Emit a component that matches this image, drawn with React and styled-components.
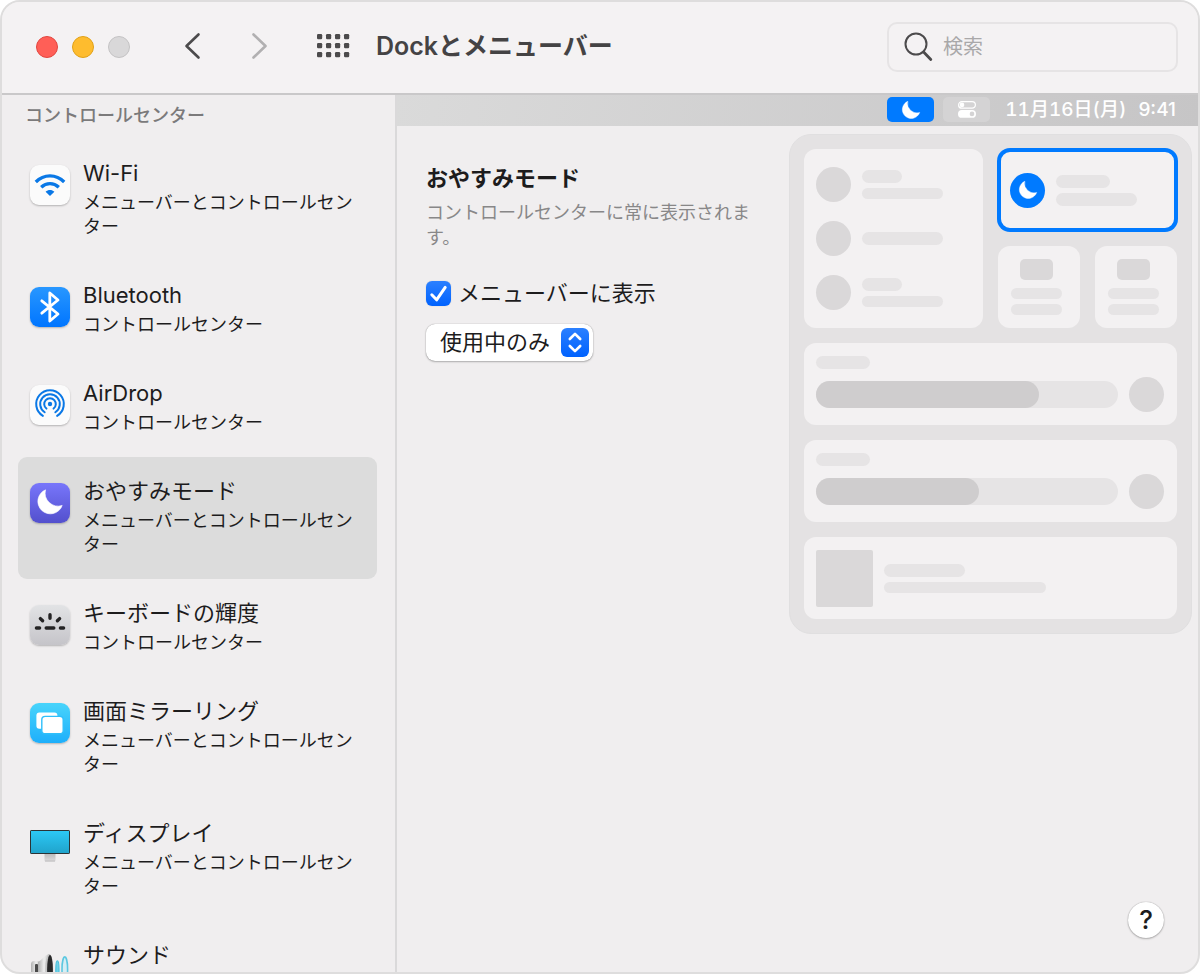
import React, { useState } from 'react'
import styled, { createGlobalStyle, css } from 'styled-components'

const GlobalStyle = createGlobalStyle`
  * {
    box-sizing: border-box;
  }
  body {
    margin: 0;
    background: #fff;
    color: #1d1c1d;
    font-family: Inter, "Noto Sans CJK JP", sans-serif;
  }
  button, input, select {
    font-family: inherit;
    color: inherit;
  }
  h1, h2, h3, p, ul {
    margin: 0;
    padding: 0;
  }
`

const Window = styled.div`
  display: flex;
  flex-direction: column;
  height: 100vh;
  overflow: hidden;
  border: 2px solid #dedddd;
  border-radius: 20px;
  background: #f0eeef;
`

/* toolbar */

const Toolbar = styled.header`
  display: flex;
  align-items: center;
  flex: none;
  height: 93px;
  padding: 0 20px 2px 34px;
  background: #f4f2f3;
  border-bottom: 2px solid #c9c8c9;
`

const Lights = styled.div`
  display: flex;
  gap: 14px;
`

const Light = styled.button`
  width: 22px;
  height: 22px;
  padding: 0;
  border: 1px solid ${p => p.$edge};
  border-radius: 50%;
  background: ${p => p.$color};
`

const NavButton = styled.button`
  display: flex;
  padding: 0;
  border: 0;
  background: none;
  color: ${p => (p.disabled ? '#b1b0b1' : '#4c4b4c')};
`

const Nav = styled.nav`
  display: flex;
  align-items: center;
  gap: 48px;
  margin: 0 26px 0 53px;
  padding-bottom: 2px;
`

const WindowTitle = styled.h1`
  flex: 1;
  padding-bottom: 2px;
  font-size: 25px;
  line-height: 36px;
  font-weight: 600;
  color: #444344;
`

const SearchBox = styled.label`
  display: flex;
  align-items: center;
  gap: 10px;
  width: 291px;
  height: 50px;
  padding: 0 15px;
  border: 2px solid #e6e4e5;
  border-radius: 10px;
`

const SearchInput = styled.input`
  flex: 1;
  min-width: 0;
  padding: 0;
  border: 0;
  outline: 0;
  background: none;
  font-size: 20px;
  line-height: 28px;
  &::placeholder {
    color: #a9a8a9;
  }
`

/* sidebar */

const Body = styled.div`
  display: flex;
  flex: 1;
  min-height: 0;
`

const Sidebar = styled.aside`
  flex: 0 0 395px;
  padding: 9px 18px 0 16px;
  border-right: 2px solid #dad9da;
  overflow-y: auto;
  scrollbar-width: none;
`

const GroupName = styled.h2`
  margin: 0 0 11px 7px;
  font-size: 18px;
  line-height: 24px;
  font-weight: 500;
  color: #7b7a7b;
`

const ItemList = styled.ul`
  list-style: none;
`

const Item = styled.button`
  display: flex;
  align-items: flex-start;
  gap: 13px;
  width: 100%;
  padding: 20px 14px 22px 12px;
  border: 0;
  border-radius: 9px;
  background: none;
  text-align: left;
  ${p => p.$selected && css`
    background: #dcdcdc;
  `}
`

const ItemIcon = styled.span`
  display: flex;
  flex: none;
  margin-top: 6px;
  border-radius: 9px;
  ${p => p.$tile && css`
    background: ${p.$tile};
    box-shadow: 0 1px 2px rgba(0, 0, 0, 0.25);
  `}
`

const ItemText = styled.span`
  display: flex;
  flex-direction: column;
  gap: 4px;
`

const ItemName = styled.span`
  font-size: 22px;
  line-height: 28px;
`

const ItemPlace = styled.span`
  font-size: 18px;
  line-height: 24px;
`

/* content */

const Content = styled.main`
  display: flex;
  flex-direction: column;
  flex: 1;
  min-width: 0;
`

const MenuBar = styled.div`
  display: flex;
  align-items: center;
  justify-content: flex-end;
  gap: 9px;
  height: 31px;
  padding: 0 22px 2px 0;
  background: linear-gradient(100deg, #dadada, #c6c5c6);
  color: #fff;
`

const MenuExtra = styled.span`
  display: flex;
  align-items: center;
  justify-content: center;
  width: 47px;
  height: 25px;
  border-radius: 5px;
  background: ${p => (p.$active ? '#007aff' : '#d4d3d4')};
`

const Clock = styled.span`
  display: flex;
  gap: 12px;
  margin-left: 6px;
  font-size: 19px;
  line-height: 25px;
  font-weight: 500;
`

const ClockDate = styled.span`
  font-variant-numeric: tabular-nums;
`

const Pane = styled.div`
  display: flex;
  flex: 1;
  align-items: flex-start;
  gap: 25px;
  padding: 8px 6px 0 29px;
`

const Settings = styled.section`
  flex: 1;
  padding-top: 30px;
`

const PaneTitle = styled.h2`
  font-size: 22px;
  line-height: 28px;
  font-weight: 600;
`

const PaneText = styled.p`
  margin: 8px 0 29px;
  font-size: 18px;
  line-height: 25px;
  color: #888788;
`

const CheckRow = styled.label`
  display: flex;
  align-items: center;
  gap: 7px;
  font-size: 22px;
  line-height: 28px;
`

const CheckBox = styled.span`
  position: relative;
  display: flex;
  svg {
    position: absolute;
    inset: 0;
    pointer-events: none;
  }
`

const CheckInput = styled.input`
  appearance: none;
  width: 25px;
  height: 25px;
  margin: 0;
  border-radius: 6px;
  background: #fff;
  box-shadow: 0 0 1px rgba(0, 0, 0, 0.3);
  &:checked {
    background: linear-gradient(#2b80ff, #0062fe);
  }
`

const SelectBox = styled.div`
  position: relative;
  width: 167px;
  margin-top: 17px;
`

const Select = styled.select`
  appearance: none;
  display: block;
  width: 100%;
  height: 37px;
  padding: 0 40px 2px 14px;
  border: 0;
  border-radius: 9px;
  background: #fff;
  box-shadow: 0 0 1px rgba(0, 0, 0, 0.4), 0 1px 2px rgba(0, 0, 0, 0.25);
  font-size: 22px;
`

const SelectArrows = styled.span`
  position: absolute;
  top: 4px;
  right: 4px;
  display: flex;
  border-radius: 6px;
  background: linear-gradient(#2b80ff, #0062fe);
  pointer-events: none;
`

const Footer = styled.footer`
  display: flex;
  justify-content: flex-end;
  padding: 0 34px 34px;
`

const HelpButton = styled.button`
  width: 36px;
  height: 36px;
  padding: 0;
  border: 0;
  border-radius: 50%;
  background: #fff;
  box-shadow: 0 0 1px rgba(0, 0, 0, 0.4), 0 1px 2px rgba(0, 0, 0, 0.25);
  font-size: 26px;
  line-height: 36px;
  font-weight: 500;
`

/* control center preview */

const Preview = styled.div`
  display: grid;
  grid-template-columns: 1fr 1fr;
  gap: 15px;
  flex: none;
  width: 403px;
  padding: 14px;
  border: 1px solid #e0dfe0;
  border-radius: 22px;
  background: #e4e2e3;
`

const Card = styled.div`
  display: flex;
  min-height: 82px;
  padding: 12px;
  border-radius: 12px;
  background: #f3f1f2;
`

const ToggleCard = styled(Card)`
  flex-direction: column;
  gap: 19px;
  padding: 18px 12px;
`

const FocusCard = styled(Card)`
  align-items: center;
  padding: 0 9px;
  border: 3px solid #007aff;
  box-shadow: 0 0 0 1px #007aff;
`

const SmallCard = styled(Card)`
  flex: 1;
  flex-direction: column;
  gap: 5px;
  padding: 13px;
`

const SliderCard = styled(Card)`
  grid-column: 1 / -1;
  flex-direction: column;
  gap: 8px;
  padding: 13px 13px 13px 12px;
`

const MediaCard = styled(Card)`
  grid-column: 1 / -1;
  align-items: center;
  gap: 11px;
`

const RightCards = styled.div`
  display: flex;
  flex-direction: column;
  gap: 15px;
`

const CardPair = styled.div`
  display: flex;
  gap: 15px;
`

const Row = styled.div`
  display: flex;
  align-items: center;
  gap: 11px;
`

const Lines = styled.div`
  display: flex;
  flex-direction: column;
  gap: 5px;
`

const Line = styled.div`
  width: ${p => p.$w}px;
  height: ${p => (p.$thin ? 11 : 13)}px;
  border-radius: 7px;
  background: #e6e4e5;
`

const Dot = styled.div`
  display: flex;
  align-items: center;
  justify-content: center;
  flex: none;
  width: 35px;
  height: 35px;
  border-radius: 50%;
  background: ${p => (p.$active ? '#007aff' : '#dad8d9')};
`

const Thumb = styled.div`
  width: 33px;
  height: 21px;
  margin: 0 0 3px 9px;
  border-radius: 5px;
  background: #dad8d9;
`

const Cover = styled.div`
  width: 57px;
  height: 57px;
  border-radius: 2px;
  background: #dad8d9;
`

const Track = styled.div`
  flex: 1;
  height: 27px;
  border-radius: 14px;
  background: #e6e4e5;
`

const Fill = styled.div`
  height: 100%;
  border-radius: 14px;
  background: #cfcdce;
`

/* icons */

const Moon = ({ small }) => (
  <svg width={small ? 20 : 40} height={small ? 20 : 40} viewBox={small ? '6 5 28 28' : '0 0 40 40'}>
    <path fill="#fff" stroke="#fff" strokeWidth="0.6" strokeLinejoin="round"
      d="M15.6 6.8A12.5 12.5 0 1 0 32.2 22.4A13 13 0 0 1 15.6 6.8Z" />
  </svg>
)

const WifiIcon = () => (
  <svg width="40" height="40" viewBox="0 0 40 40" fill="none" stroke="#0a78e6" strokeWidth="3.3">
    <path d="M5.8 17C13.8 8.9 26.2 8.9 34.2 17" />
    <path d="M11.2 22.3C16.4 17.4 23.6 17.4 28.8 22.3" />
    <path d="M15.6 26.7c2.5-2.4 6.3-2.4 8.8 0L20 31z" fill="#0a78e6" stroke="none" />
  </svg>
)

const BluetoothIcon = () => (
  <svg width="40" height="40" viewBox="0 0 40 40" fill="none" stroke="#fff" strokeWidth="2.8" strokeLinecap="round" strokeLinejoin="round">
    <path d="M11.8 13.8L28 27L19.8 34V6L28 13L11.8 26.2" />
  </svg>
)

const ring = (r, deg) => {
  const a = (deg * Math.PI) / 180
  const dx = r * Math.sin(a)
  const y = 19 + r * Math.cos(a)
  return `M${20 - dx} ${y}A${r} ${r} 0 1 1 ${20 + dx} ${y}`
}

const AirDropIcon = () => (
  <svg width="40" height="40" viewBox="0 0 40 40" fill="none" stroke="#0a78e6" strokeWidth="2" strokeLinecap="round">
    <path d={ring(13.8, 31)} />
    <path d={ring(9.8, 33)} />
    <path d={ring(5.8, 38)} />
    <circle cx="20" cy="19" r="2.2" fill="#0a78e6" stroke="none" />
  </svg>
)

const KeyboardIcon = () => (
  <svg width="40" height="40" viewBox="0 0 40 40" fill="none" stroke="#242324" strokeWidth="3.4" strokeLinecap="round">
    <path d="M6.4 23H9.6M16.2 23H23.8M30.4 23H33.6M20 9.8V13.2M10.4 13.6L12.6 15.8M29.6 13.6L27.4 15.8" />
  </svg>
)

const MirrorIcon = () => (
  <svg width="40" height="40" viewBox="0 0 40 40" fill="#fff">
    <rect x="6.4" y="9.4" width="21" height="16.4" rx="3" />
    <rect x="11.8" y="13.4" width="21.4" height="17.4" rx="3.4" stroke="#2fbffb" strokeWidth="1.4" />
  </svg>
)

const DisplayIcon = () => (
  <svg width="40" height="40" viewBox="0 0 40 40">
    <defs>
      <linearGradient id="screen" x1="0" y1="0" x2="0" y2="1">
        <stop offset="0" stopColor="#2cc9f6" />
        <stop offset="1" stopColor="#20a3cb" />
      </linearGradient>
      <linearGradient id="stand" x1="0" y1="0" x2="0" y2="1">
        <stop offset="0" stopColor="#b9b8b9" />
        <stop offset="1" stopColor="#dddcdd" />
      </linearGradient>
    </defs>
    <rect x="14.5" y="28" width="11" height="8.5" rx="1" fill="url(#stand)" />
    <rect x="15" y="35.4" width="10" height="1.2" fill="#c3c2c3" />
    <rect x="0.5" y="5.5" width="39" height="23" rx="0.6" fill="url(#screen)" stroke="#2c3335" />
  </svg>
)

const SoundIcon = () => (
  <svg width="40" height="40" viewBox="0 0 40 40">
    <defs>
      <linearGradient id="cone" x1="0" y1="0" x2="1" y2="0">
        <stop offset="0" stopColor="#b0b0b0" />
        <stop offset="0.5" stopColor="#eeeeee" />
        <stop offset="1" stopColor="#c0c0c0" />
      </linearGradient>
    </defs>
    <rect x="1" y="14" width="10" height="17" rx="3.4" fill="url(#cone)" />
    <rect x="5" y="17" width="3" height="12" rx="1" fill="#4a4a4a" />
    <path d="M8 15C12 13 14 9 18.4 7H20V38H18.4C14 36 12 32 8 30Z" fill="url(#cone)" />
    <ellipse cx="19.2" cy="22.5" rx="4" ry="15.6" fill="#c4c4c4" />
    <ellipse cx="20" cy="22.5" rx="2.9" ry="14.4" fill="#29292a" />
    <ellipse cx="27.4" cy="22.5" rx="1.6" ry="8.6" fill="#6fd0e6" stroke="#48bfdc" strokeWidth="1.2" />
    <ellipse cx="34.8" cy="22.5" rx="2.8" ry="12.6" fill="#d5eef4" stroke="#5cc7e0" strokeWidth="1.6" />
  </svg>
)

const ControlCenterIcon = () => (
  <svg width="18" height="17" viewBox="0 0 18 17">
    <rect x="0.6" y="0.6" width="16.8" height="6.6" rx="3.3" fill="none" stroke="#fff" strokeWidth="1.2" />
    <circle cx="4" cy="3.9" r="2.3" fill="#fff" />
    <rect x="0" y="9" width="18" height="7.8" rx="3.9" fill="#fff" />
    <circle cx="14" cy="12.9" r="2.3" fill="#d4d3d4" />
  </svg>
)

const Chevron = ({ flip }) => (
  <svg width="19" height="28" viewBox="0 0 19 28" fill="none" stroke="currentColor" strokeWidth="2.6" strokeLinecap="round" strokeLinejoin="round">
    <path d={flip ? 'M3.5 2.5L15.5 14L3.5 25.5' : 'M15.5 2.5L3.5 14L15.5 25.5'} />
  </svg>
)

const GridIcon = () => (
  <svg width="33" height="24" viewBox="0 0 33 24" fill="currentColor">
    {[0, 9, 18].map(y => [0, 9, 18, 27].map(x => (
      <rect key={`${x}-${y}`} x={x} y={y} width="5.2" height="5.2" rx="1.2" />
    )))}
  </svg>
)

const SearchIcon = () => (
  <svg width="29" height="30" viewBox="0 0 29 30" fill="none" stroke="#4c4b4c" strokeLinecap="round">
    <circle cx="12" cy="12" r="10.5" strokeWidth="2" />
    <path d="M19.6 20L26.8 27.5" strokeWidth="2.8" />
  </svg>
)

const both = 'メニューバーとコントロールセンター'
const single = 'コントロールセンター'

const items = [
  { name: 'Wi-Fi', place: both, icon: <WifiIcon />, tile: '#fbfbfb' },
  { name: 'Bluetooth', place: single, icon: <BluetoothIcon />, tile: 'linear-gradient(#2897ff, #0075ff)' },
  { name: 'AirDrop', place: single, icon: <AirDropIcon />, tile: '#fbfbfb' },
  { name: 'おやすみモード', place: both, icon: <Moon />, tile: 'linear-gradient(#7876fb, #5350cd)' },
  { name: 'キーボードの輝度', place: single, icon: <KeyboardIcon />, tile: 'linear-gradient(#e2e3e5, #c5c4c9)' },
  { name: '画面ミラーリング', place: both, icon: <MirrorIcon />, tile: 'linear-gradient(#48d4fb, #1eaffb)' },
  { name: 'ディスプレイ', place: both, icon: <DisplayIcon /> },
  { name: 'サウンド', icon: <SoundIcon /> },
]

const Slider = ({ value }) => (
  <SliderCard>
    <Line $w={54} />
    <Row>
      <Track><Fill style={{ width: `${value}%` }} /></Track>
      <Dot />
    </Row>
  </SliderCard>
)

const ControlCenterPreview = () => (
  <Preview aria-hidden="true">
    <ToggleCard>
      <Row><Dot /><Lines><Line $w={40} /><Line $w={81} $thin /></Lines></Row>
      <Row><Dot /><Line $w={81} /></Row>
      <Row><Dot /><Lines><Line $w={40} /><Line $w={81} $thin /></Lines></Row>
    </ToggleCard>
    <RightCards>
      <FocusCard>
        <Row>
          <Dot $active><Moon small /></Dot>
          <Lines><Line $w={54} /><Line $w={81} /></Lines>
        </Row>
      </FocusCard>
      <CardPair>
        <SmallCard><Thumb /><Line $w={51} $thin /><Line $w={51} $thin /></SmallCard>
        <SmallCard><Thumb /><Line $w={51} $thin /><Line $w={51} $thin /></SmallCard>
      </CardPair>
    </RightCards>
    <Slider value={74} />
    <Slider value={54} />
    <MediaCard>
      <Cover />
      <Lines><Line $w={81} /><Line $w={162} $thin /></Lines>
    </MediaCard>
  </Preview>
)

const App = () => {
  const [selected, setSelected] = useState('おやすみモード')
  const [shown, setShown] = useState(true)

  return (
    <Window>
      <GlobalStyle />
      <Toolbar>
        <Lights>
          <Light $color="#ff5f57" $edge="#e2463f" aria-label="閉じる" />
          <Light $color="#febc2e" $edge="#e1a116" aria-label="しまう" />
          <Light $color="#d9d8d9" $edge="#c4c3c4" aria-label="拡大" />
        </Lights>
        <Nav>
          <NavButton aria-label="戻る"><Chevron /></NavButton>
          <NavButton aria-label="進む" disabled><Chevron flip /></NavButton>
          <NavButton aria-label="すべてを表示"><GridIcon /></NavButton>
        </Nav>
        <WindowTitle>Dockとメニューバー</WindowTitle>
        <SearchBox>
          <SearchIcon />
          <SearchInput type="text" placeholder="検索" aria-label="検索" />
        </SearchBox>
      </Toolbar>
      <Body>
        <Sidebar>
          <GroupName>コントロールセンター</GroupName>
          <ItemList>
            {items.map(item => (
              <li key={item.name}>
                <Item $selected={item.name === selected} onClick={() => setSelected(item.name)}>
                  <ItemIcon $tile={item.tile}>{item.icon}</ItemIcon>
                  <ItemText>
                    <ItemName>{item.name}</ItemName>
                    {item.place && <ItemPlace>{item.place}</ItemPlace>}
                  </ItemText>
                </Item>
              </li>
            ))}
          </ItemList>
        </Sidebar>
        <Content>
          <MenuBar>
            <MenuExtra $active><Moon small /></MenuExtra>
            <MenuExtra><ControlCenterIcon /></MenuExtra>
            <Clock><ClockDate>11月16日(月)</ClockDate><span>9:41</span></Clock>
          </MenuBar>
          <Pane>
            <Settings>
              <PaneTitle>おやすみモード</PaneTitle>
              <PaneText>コントロールセンターに常に表示されます。</PaneText>
              <CheckRow>
                <CheckBox>
                  <CheckInput type="checkbox" checked={shown} onChange={e => setShown(e.target.checked)} />
                  {shown && (
                    <svg width="25" height="25" viewBox="0 0 25 25" fill="none" stroke="#fff" strokeWidth="3" strokeLinecap="round" strokeLinejoin="round">
                      <path d="M5.8 13.8L10.6 18.8L19.2 6.4" />
                    </svg>
                  )}
                </CheckBox>
                メニューバーに表示
              </CheckRow>
              <SelectBox>
                <Select aria-label="メニューバーに表示" defaultValue="active">
                  <option value="active">使用中のみ</option>
                  <option value="always">常に</option>
                </Select>
                <SelectArrows>
                  <svg width="28" height="29" viewBox="0 0 28 29" fill="none" stroke="#fff" strokeWidth="2.6" strokeLinecap="round" strokeLinejoin="round">
                    <path d="M8.8 11L14 5.8L19.2 11M8.8 18L14 23.2L19.2 18" />
                  </svg>
                </SelectArrows>
              </SelectBox>
            </Settings>
            <ControlCenterPreview />
          </Pane>
          <Footer>
            <HelpButton aria-label="ヘルプ">?</HelpButton>
          </Footer>
        </Content>
      </Body>
    </Window>
  )
}

export default App
